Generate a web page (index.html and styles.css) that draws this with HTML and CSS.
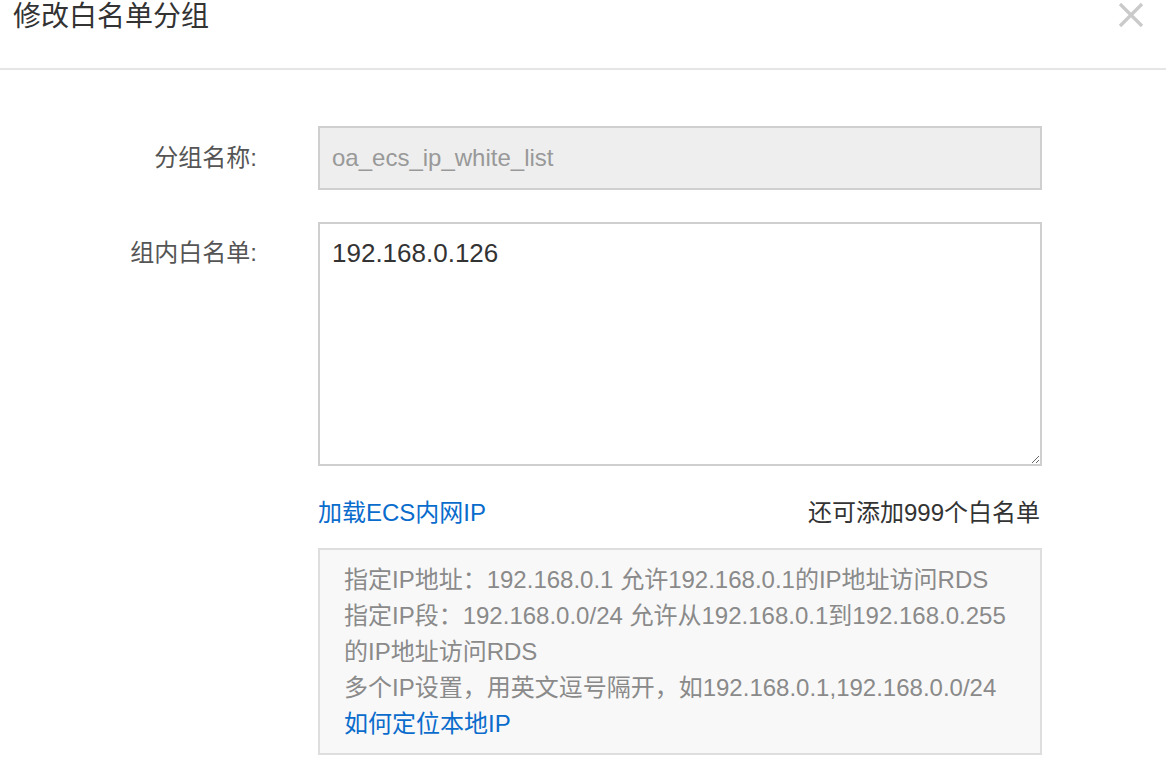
FILE: index.html
```html
<!DOCTYPE html>
<html lang="zh-CN">
<head>
<meta charset="utf-8">
<title>修改白名单分组</title>
<link rel="stylesheet" href="styles.css">
</head>
<body>
<div class="dialog">
  <header class="dlg-head">
    <h1 class="dlg-title">修改白名单分组</h1>
    <button class="dlg-close" type="button" aria-label="关闭">
      <svg width="26" height="26" viewBox="0 0 26 26"><path d="M2 2 L24 24 M24 2 L2 24" stroke="#cacaca" stroke-width="3.2" stroke-linecap="butt"/></svg>
    </button>
  </header>
  <div class="dlg-body">
    <div class="form-row row-input">
      <label class="form-label">分组名称:</label>
      <div class="form-ctrl">
        <input class="input" type="text" value="oa_ecs_ip_white_list" disabled>
      </div>
    </div>
    <div class="form-row row-area">
      <label class="form-label label-top">组内白名单:</label>
      <div class="form-ctrl">
        <textarea class="textarea">192.168.0.126</textarea>
        <div class="ctrl-meta">
          <a class="link" href="#">加载ECS内网IP</a>
          <span class="quota">还可添加999个白名单</span>
        </div>
        <div class="help">
          <div>指定IP地址：192.168.0.1 允许192.168.0.1的IP地址访问RDS</div>
          <div>指定IP段：192.168.0.0/24 允许从192.168.0.1到192.168.0.255 的IP地址访问RDS</div>
          <div>多个IP设置，用英文逗号隔开，如192.168.0.1,192.168.0.0/24</div>
          <div><a class="link" href="#">如何定位本地IP</a></div>
        </div>
      </div>
    </div>
  </div>
</div>
</body>
</html>
```
FILE: styles.css
```css
* { box-sizing: border-box; }
html, body {
  margin: 0;
  padding: 0;
  background: #fff;
}
body {
  font-family: "Liberation Sans", "Noto Sans CJK SC", sans-serif;
  color: #333;
}
.dialog {
  width: 1166px;
}
.dlg-head {
  height: 70px;
  border-bottom: 2px solid #e5e5e5;
  display: flex;
  justify-content: space-between;
  align-items: flex-start;
  padding: 0 22px 0 13px;
}
.dlg-title {
  margin: 0;
  padding-top: 3px;
  font-size: 28px;
  line-height: 28px;
  font-weight: normal;
  color: #333;
}
.dlg-close {
  border: 0;
  background: none;
  padding: 0;
  margin-top: 2px;
  width: 26px;
  height: 26px;
  cursor: pointer;
}
.dlg-close svg { display: block; }
.dlg-body {
  padding-top: 56px;
  display: flex;
  flex-direction: column;
  gap: 32px;
}
.form-row {
  display: grid;
  grid-template-columns: 257px 724px;
  column-gap: 61px;
}
.form-label {
  text-align: right;
  font-size: 24px;
  color: #555;
}
.row-input .form-label {
  line-height: 64px;
}
.label-top {
  padding-top: 12px;
  line-height: 38px;
}
.input {
  display: block;
  width: 100%;
  height: 64px;
  border: 2px solid #cfcfcf;
  background: #eee;
  padding: 0 12px;
  font-family: inherit;
  font-size: 24px;
  color: #999;
  margin: 0;
}
.textarea {
  display: block;
  width: 100%;
  height: 244px;
  border: 2px solid #cfcfcf;
  background: #fff;
  padding: 10px 12px;
  margin: 0;
  font-family: inherit;
  font-size: 26px;
  line-height: 38px;
  color: #333;
  resize: vertical;
  outline: none;
}
.ctrl-meta {
  margin-top: 29px;
  display: flex;
  justify-content: space-between;
  font-size: 24px;
  line-height: 36px;
  padding-right: 2px;
}
.link {
  color: #0a6ccc;
  text-decoration: none;
}
.quota { color: #333; }
.help {
  margin-top: 17px;
  border: 2px solid #dedede;
  background: #f8f8f8;
  padding: 12px 24px 11px;
  font-size: 24px;
  line-height: 36px;
  color: #8a8a8a;
}
```
